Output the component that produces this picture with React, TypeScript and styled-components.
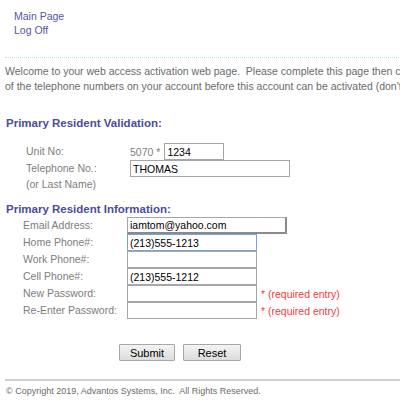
import React from "react";
import styled, { createGlobalStyle } from "styled-components";

const Global = createGlobalStyle`
  html, body { margin: 0; padding: 0; background: #fff; overflow: hidden; }
  body { font-family: "Liberation Sans", Arial, sans-serif; }
`;

const Page = styled.div`
  width: 400px;
  height: 400px;
  overflow: hidden;
  padding: 9px 0 0 5px;
  box-sizing: border-box;
  font-size: 10.5px;
`;

const Nav = styled.nav`
  display: flex;
  flex-direction: column;
  padding-left: 9px;
  margin-bottom: 20px;
`;

const NavLink = styled.a`
  color: #5656a6;
  text-decoration: none;
  font-size: 10.5px;
  line-height: 14px;
`;

const Rule = styled.hr<{ $dotted?: boolean }>`
  border: 0;
  border-top: ${(p) => (p.$dotted ? "1px dotted #b9dcef" : "2px solid #d0d0d0")};
  margin: 0;
  width: 420px;
`;

const Intro = styled.p`
  margin: 6px 0 22px;
  color: #6a6a6a;
  white-space: nowrap;
  line-height: 15px;
`;

const Heading = styled.h3<{ $after: number }>`
  margin: 0 0 ${(p) => p.$after}px;
  color: #4a4d9b;
  font-size: 11.5px;
  font-weight: bold;
  line-height: 14px;
  padding-left: 1px;
`;

const FormTable = styled.div<{ $indent: number; $after?: number }>`
  display: grid;
  grid-template-columns: 104px auto;
  align-items: center;
  padding-left: ${(p) => p.$indent}px;
  margin-bottom: ${(p) => p.$after ?? 0}px;
`;

const Label = styled.span`
  color: #7d7d7d;
  line-height: 15px;
`;

const Cell = styled.div`
  display: flex;
  align-items: center;
  gap: 4px;
  color: #7d7d7d;
`;

const Input = styled.input<{ $w: number; $focus?: boolean; $shadow?: boolean }>`
  box-sizing: border-box;
  width: ${(p) => p.$w}px;
  height: 17px;
  margin: 0;
  padding: 0 2px;
  font-family: "Liberation Sans", Arial, sans-serif;
  font-size: 10.5px;
  color: #000;
  background: #fff;
  border: 1px solid ${(p) => (p.$focus ? "#7ba2d9" : "#a6a6a6")};
  ${(p) => (p.$shadow ? "border-right: 2px solid #8a8a8a; border-bottom: 2px solid #8a8a8a;" : "")}
  outline: none;
`;

const Required = styled.span`
  color: #f03c3c;
`;

const Buttons = styled.div`
  display: flex;
  gap: 8px;
  padding-left: 114px;
  margin-top: 25px;
`;

const Button = styled.button<{ $w: number }>`
  box-sizing: border-box;
  width: ${(p) => p.$w}px;
  height: 17px;
  padding: 0;
  font-family: "Liberation Sans", Arial, sans-serif;
  font-size: 11px;
  color: #000;
  background: linear-gradient(#f4f4f4, #dcdcdc);
  border: 1px solid #a8a8a8;
  border-radius: 1px;
`;

const Footer = styled.footer`
  margin-top: 18px;
`;

const Copy = styled.p`
  margin: 5px 0 0 1px;
  font-size: 9px;
  color: #6a6a6a;
`;

export default function App() {
  return (
    <>
      <Global />
      <Page>
        <Nav>
          <NavLink href="#">Main Page</NavLink>
          <NavLink href="#">Log Off</NavLink>
        </Nav>
        <Rule $dotted />
        <Intro>
          Welcome to your web access activation web page.&nbsp; Please complete this page then click Submit.&nbsp; You must enter one
          <br />
          of the telephone numbers on your account before this account can be activated (don't use dashes or spaces).
        </Intro>
        <Heading $after={13}>Primary Resident Validation:</Heading>
        <FormTable $indent={21} $after={10}>
          <Label>Unit No:</Label>
          <Cell>
            5070 *<Input $w={60} defaultValue="1234" />
          </Cell>
          <Label>Telephone No.:</Label>
          <Cell>
            <Input $w={160} defaultValue="THOMAS" />
          </Cell>
          <Label>(or Last Name)</Label>
          <span />
        </FormTable>
        <Heading $after={1}>Primary Resident Information:</Heading>
        <FormTable $indent={18}>
          <Label>Email Address:</Label>
          <Cell>
            <Input $w={160} $shadow defaultValue="iamtom@yahoo.com" />
          </Cell>
          <Label>Home Phone#:</Label>
          <Cell>
            <Input $w={130} $focus defaultValue="(213)555-1213" />
          </Cell>
          <Label>Work Phone#:</Label>
          <Cell>
            <Input $w={130} />
          </Cell>
          <Label>Cell Phone#:</Label>
          <Cell>
            <Input $w={130} defaultValue="(213)555-1212" />
          </Cell>
          <Label>New Password:</Label>
          <Cell>
            <Input $w={130} type="password" />
            <Required>* (required entry)</Required>
          </Cell>
          <Label>Re-Enter Password:</Label>
          <Cell>
            <Input $w={130} type="password" />
            <Required>* (required entry)</Required>
          </Cell>
        </FormTable>
        <Buttons>
          <Button $w={56}>Submit</Button>
          <Button $w={58}>Reset</Button>
        </Buttons>
        <Footer>
          <Rule />
          <Copy>© Copyright 2019, Advantos Systems, Inc.&nbsp; All Rights Reserved.</Copy>
        </Footer>
      </Page>
    </>
  );
}
